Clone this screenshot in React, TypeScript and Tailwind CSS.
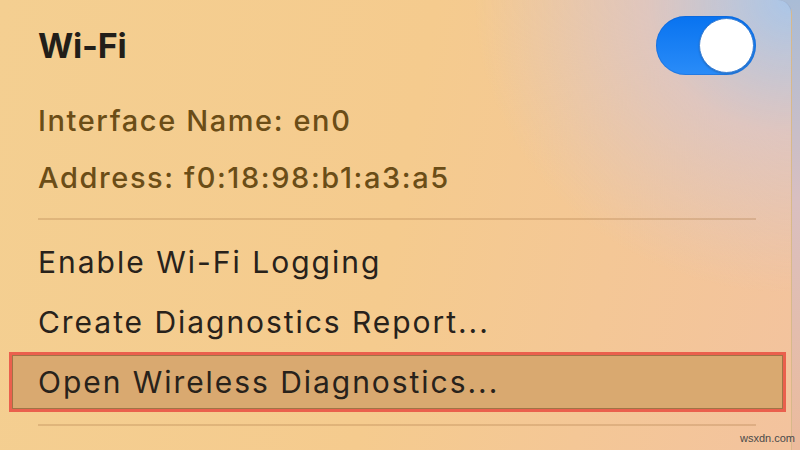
import React from "react";

export default function App() {
  return (
    <div className="relative flex h-[450px] w-[800px] overflow-hidden bg-[linear-gradient(180deg,#a9bcd6_0%,#d9bfc0_45%,#ecbb9c_100%)] font-['Inter','Liberation_Sans',sans-serif]">
      <div className="flex h-full w-[792px] flex-col rounded-tr-[14px] border-r border-[rgba(90,90,110,0.18)] bg-[radial-gradient(ellipse_40%_65%_at_100%_0%,#aac6e8_0%,rgba(216,198,204,0.75)_45%,rgba(244,204,150,0)_100%),linear-gradient(100deg,#f4cf91_0%,#f5cb8e_50%,#f3c39e_100%)] pl-[38px] pr-[35px]">
        <div className="flex h-[91px] shrink-0 items-center justify-between">
          <span className="text-[34px] font-bold leading-none tracking-[-0.2px] text-[#221e19]">Wi-Fi</span>
          <div className="flex h-[59px] w-[100px] items-center justify-end rounded-full bg-[linear-gradient(180deg,#0873f0_0%,#2a8cf8_100%)] pr-[2px] shadow-[inset_0_0_0_1px_rgba(20,90,190,0.35)]">
            <div className="h-[55px] w-[55px] rounded-full border border-[#3b7fd4] bg-white shadow-[0_1px_2px_rgba(0,0,0,0.2)]" />
          </div>
        </div>
        <div className="flex h-[58px] shrink-0 items-center text-[29px] font-medium leading-none tracking-[1.6px] text-[#6b4d17]">
          Interface Name: en0
        </div>
        <div className="flex h-[57px] shrink-0 items-center text-[29px] font-medium leading-none tracking-[1.6px] text-[#6b4d17]">
          Address: f0:18:98:b1:a3:a5
        </div>
        <div className="flex h-[26px] shrink-0 items-center">
          <div className="h-[2px] w-full bg-[rgba(170,120,70,0.28)]" />
        </div>
        <div className="flex h-[60px] shrink-0 items-center text-[30px] leading-none tracking-[2px] text-[#28221b]">
          Enable Wi-Fi Logging
        </div>
        <div className="flex h-[60px] shrink-0 items-center text-[30px] leading-none tracking-[1.95px] text-[#28221b]">
          Create Diagnostics Report...
        </div>
        <div className="-ml-[29px] -mr-[30px] flex h-[60px] shrink-0 items-center border-[3px] border-[#ea604d] bg-[#d9a970] pl-[26px] text-[30px] leading-none tracking-[1.95px] text-[#28221b] shadow-[inset_0_0_0_1px_rgba(90,50,20,0.45)]">
          Open Wireless Diagnostics...
        </div>
        <div className="flex h-[26px] shrink-0 items-center">
          <div className="h-[2px] w-full bg-[rgba(170,120,70,0.28)]" />
        </div>
      </div>
      <div className="absolute bottom-[4px] right-[5px] font-['Liberation_Sans',sans-serif] text-[11px] text-[#4a4a4a]">
        wsxdn.com
      </div>
    </div>
  );
}
